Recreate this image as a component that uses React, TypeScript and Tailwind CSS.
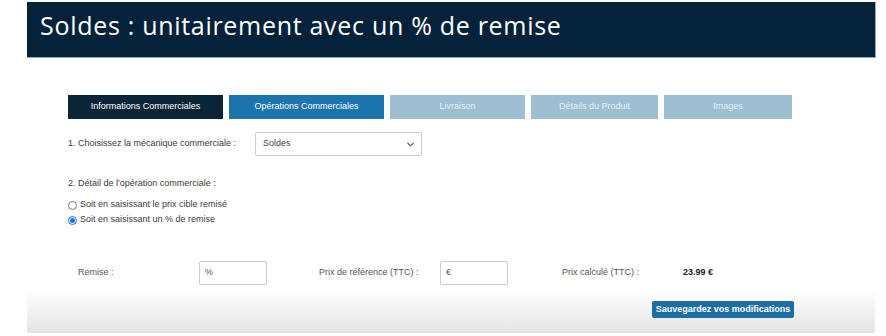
import { ChevronDown } from "lucide-react";

const tabs = [
  { label: "Informations Commerciales", w: "w-[155px]", cls: "bg-[#0b2538] text-white" },
  { label: "Opérations Commerciales", w: "w-[155px]", cls: "bg-[#1b74ae] text-white" },
  { label: "Livraison", w: "w-[135px]", cls: "bg-[#9ebfd3] text-[#e4eef4]" },
  { label: "Détails du Produit", w: "w-[127px]", cls: "bg-[#9ebfd3] text-[#e4eef4]" },
  { label: "Images", w: "w-[128px]", cls: "bg-[#9ebfd3] text-[#e4eef4]" },
];

function Radio({ checked, label }: { checked?: boolean; label: string }) {
  return (
    <div className="flex h-[15px] items-center gap-[3px]">
      <span
        className={
          "flex h-[9px] w-[9px] items-center justify-center rounded-full border " +
          (checked ? "border-[#1a73e8] bg-white" : "border-[#777] bg-white")
        }
      >
        {checked && <span className="h-[5px] w-[5px] rounded-full bg-[#1a73e8]" />}
      </span>
      <span>{label}</span>
    </div>
  );
}

export default function App() {
  return (
    <div
      className="h-[336px] w-[886px] overflow-hidden bg-white pt-[2px]"
      style={{ fontFamily: '"Liberation Sans", Arial, sans-serif' }}
    >
      {/* title banner */}
      <div className="ml-[27px] flex h-[56px] w-[849px] items-center border-r border-b border-[#9aa7b2] bg-[#04233b] pb-[8px] pl-[13px]">
        <h1
          className="text-[25px] tracking-[0.7px] text-white"
          style={{ fontFamily: '"Open Sans", "DejaVu Sans", sans-serif' }}
        >
          Soldes : unitairement avec un % de remise
        </h1>
      </div>

      <div className="ml-[27px] w-[848px]">
        <div className="h-[231px] pl-[41px] pt-[37px] text-[9px] text-[#3a3a3a]">
          {/* tabs */}
          <div className="flex gap-[6px]">
            {tabs.map((t) => (
              <div
                key={t.label}
                className={`flex h-[24px] items-center justify-center ${t.w} ${t.cls}`}
              >
                {t.label}
              </div>
            ))}
          </div>

          {/* 1. mechanic */}
          <div className="mt-[13px] flex h-[24px] items-center">
            <span className="w-[187px]">1. Choisissez la mécanique commerciale :</span>
            <div className="flex h-[24px] w-[167px] items-center justify-between rounded-[2px] border border-[#ccc] bg-white pr-[5px] pl-[7px] text-[#444]">
              <span>Soldes</span>
              <ChevronDown className="h-[11px] w-[11px] text-[#555]" strokeWidth={2.5} />
            </div>
          </div>

          {/* 2. detail */}
          <div className="mt-[21px]">2. Détail de l&apos;opération commerciale :</div>
          <div className="mt-[7px] flex flex-col">
            <Radio label="Soit en saisissant le prix cible remisé" />
            <Radio checked label="Soit en saisissant un % de remise" />
          </div>

          {/* amounts */}
          <div className="mt-[33px] flex h-[24px] items-center whitespace-nowrap text-[#555]">
            <span className="w-[131px] pl-[10px]">Remise :</span>
            <div className="flex h-[24px] w-[68px] items-center rounded-[2px] border border-[#ccc] pl-[5px]">%</div>
            <span className="w-[173px] pl-[52px]">Prix de référence (TTC) :</span>
            <div className="flex h-[24px] w-[68px] items-center rounded-[2px] border border-[#ccc] pl-[5px]">€</div>
            <span className="w-[175px] pl-[54px]">Prix calculé (TTC) :</span>
            <span className="font-bold text-[#222]">23.99 €</span>
          </div>
        </div>

        {/* footer */}
        <div className="flex h-[44px] items-start bg-gradient-to-b from-white to-[#e4e4e4] pt-[12px] pl-[625px]">
          <button className="h-[17px] w-[142px] rounded-[2px] bg-[#1b6fa6] text-[9px] leading-none font-bold text-white">
            Sauvegardez vos modifications
          </button>
        </div>
      </div>
    </div>
  );
}
